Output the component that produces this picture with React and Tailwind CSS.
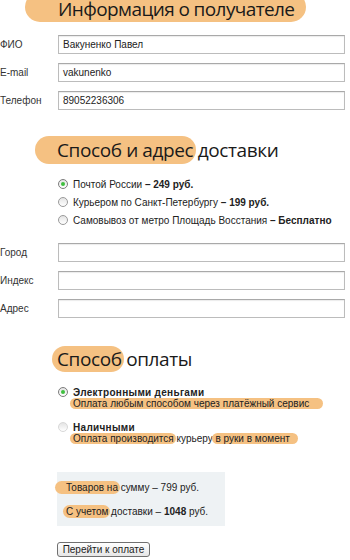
import React from "react";

const hl = "bg-[#f5c182] rounded-full";

const Field = ({ label, value, first }) => (
  <div className={`flex items-center h-[19px] ${first ? "" : "mt-[9px]"}`}>
    <span className="w-[58px] text-[#333]">{label}</span>
    <div className="w-[287px] h-[19px] border border-[#bcbcbc] border-t-[#a9a9a9] shadow-[inset_0_1px_1px_rgba(0,0,0,0.08)] bg-white px-[4px] leading-[17px] text-[#222]">
      {value}
    </div>
  </div>
);

const Radio = ({ checked, faint }) => (
  <span
    className={`inline-flex items-center justify-center w-[10px] h-[10px] rounded-full border shrink-0 bg-gradient-to-b from-[#e4e4e4] to-white ${
      faint ? "border-[#d8d8d8]" : checked ? "border-[#7c7c7c]" : "border-[#9a9a9a]"
    }`}
  >
    {checked && <span className="w-[4px] h-[4px] rounded-full bg-[#3fbf3f]" />}
  </span>
);

const Heading = ({ children, className = "" }) => (
  <h2
    className={`text-[19px] leading-[24px] tracking-[-0.4px] text-[#1a1a1a] font-normal whitespace-nowrap ${className}`}
    style={{ fontFamily: '"Open Sans", sans-serif' }}
  >
    {children}
  </h2>
);

export default function App() {
  const delivery = [
    { text: "Почтой России", price: "249 руб.", checked: true },
    { text: "Курьером по Санкт-Петербургу", price: "199 руб." },
    { text: "Самовывоз от метро Площадь Восстания", price: "Бесплатно" },
  ];

  return (
    <div
      className="w-[350px] h-[560px] overflow-hidden bg-white text-[10px] text-[#222]"
      style={{ fontFamily: '"Liberation Sans", Arial, sans-serif' }}
    >
      <Heading className="pl-[58px] -mt-[3px] tracking-[-0.6px]">
        <span className={`${hl} pl-[33px] -ml-[33px] pr-[12px] pt-[4px]`}>Информация о получателе</span>
      </Heading>

      <div className="mt-[14px]">
        <Field first label="ФИО" value="Вакуненко Павел" />
        <Field label="E-mail" value="vakunenko" />
        <Field label="Телефон" value="89052236306" />
      </div>

      <Heading className="pl-[57px] mt-[28px]">
        <span className={`${hl} pl-[22px] -ml-[22px] pr-[3px] -mr-[3px] py-[1px]`}>Способ и адрес</span> доставки
      </Heading>

      <div className="mt-[13px] pl-[58px]">
        {delivery.map((d) => (
          <div key={d.text} className="flex items-center gap-[5px] h-[18px] whitespace-nowrap">
            <Radio checked={d.checked} />
            <span>
              {d.text} <b>– {d.price}</b>
            </span>
          </div>
        ))}
      </div>

      <div className="mt-[14px]">
        <Field first label="Город" value="" />
        <Field label="Индекс" value="" />
        <Field label="Адрес" value="" />
      </div>

      <Heading className="pl-[57px] mt-[29px]">
        <span className={`${hl} pl-[5px] -ml-[5px] pr-[2px] -mr-[2px]`}>Способ</span> оплаты
      </Heading>

      <div className="pl-[58px] mt-[15px] whitespace-nowrap">
        <div className="flex items-center gap-[5px] h-[12px]">
          <Radio checked />
          <b className="tracking-[0.3px]">Электронными деньгами</b>
        </div>
        <div className="pl-[15px] h-[12px] leading-[12px]">
          <span className={`${hl} pl-[3px] -ml-[3px] pr-[14px]`}>Оплата любым способом через платёжный сервис</span>
        </div>

        <div className="flex items-center gap-[5px] h-[12px] mt-[11px]">
          <Radio faint />
          <b className="tracking-[0.3px]">Наличными</b>
        </div>
        <div className="pl-[15px] h-[12px] leading-[12px]">
          <span className={`${hl} pl-[3px] -ml-[3px] pr-[2px] -mr-[2px]`}>Оплата производится</span> курьеру{" "}
          <span className={`${hl} pl-[3px] -ml-[3px] pr-[8px]`}>в руки в момент</span>
        </div>
      </div>

      <div className="ml-[57px] mt-[27px] w-[168px] h-[54px] bg-[#eef2f4] pl-[9px] pt-[10px] whitespace-nowrap">
        <div className="leading-[12px]">
          <span className={`${hl} pl-[11px] -ml-[11px] pr-[2px] -mr-[2px] py-[1px]`}>Товаров на</span> сумму – 799 руб.
        </div>
        <div className="leading-[12px] mt-[12px]">
          <span className={`${hl} pl-[3px] -ml-[3px] pr-[2px] -mr-[2px] py-[1px]`}>С учетом</span> доставки – <b>1048</b> руб.
        </div>
      </div>

      <button className="ml-[57px] mt-[16px] w-[93px] h-[15px] border border-[#707070] rounded-[3px] bg-gradient-to-b from-white to-[#e6e6e6] text-[10px] leading-[13px] text-[#222] text-center">
        Перейти к оплате
      </button>
    </div>
  );
}
